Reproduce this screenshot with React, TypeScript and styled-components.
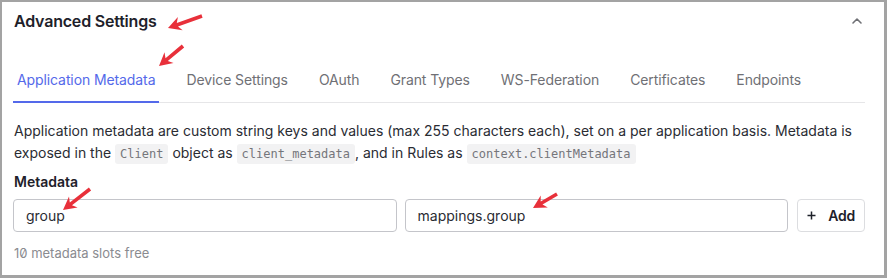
import React, { useState } from "react";
import styled, { createGlobalStyle } from "styled-components";

const GlobalStyle = createGlobalStyle`
  html, body {
    margin: 0;
    padding: 0;
    background: #ffffff;
  }
  body {
    font-family: Inter, "Noto Sans", "Liberation Sans", sans-serif;
    color: #1e212a;
  }
`;

const Frame = styled.div`
  position: relative;
  box-sizing: border-box;
  width: 887px;
  height: 278px;
  border-style: solid;
  border-color: #a3a3a3;
  border-width: 2px 3px 3px 2px;
  padding: 0 19px 0 11px;
  overflow: hidden;
`;

const Header = styled.div`
  display: flex;
  align-items: center;
  justify-content: space-between;
  height: 38px;
  padding-left: 1px;
`;

const Title = styled.h2`
  margin: 0;
  font-size: 16px;
  font-weight: 600;
  letter-spacing: -0.2px;
`;

const Collapse = styled.button`
  display: flex;
  background: none;
  border: none;
  padding: 0;
  margin-right: 2px;
  cursor: pointer;
`;

const TabBar = styled.div`
  display: flex;
  gap: 23px;
  margin-top: 30px;
  border-bottom: 1px solid #e6e6e8;
`;

const Tab = styled.button<{ active?: boolean }>`
  position: relative;
  background: none;
  border: none;
  padding: 0 4px 12px;
  font-family: inherit;
  font-size: 14px;
  line-height: 20px;
  letter-spacing: -0.1px;
  color: ${({ active }) => (active ? "#5469ea" : "#6f7075")};
  cursor: pointer;

  &::after {
    content: "";
    position: absolute;
    left: 0;
    right: 0;
    bottom: -1px;
    height: 2px;
    background: ${({ active }) => (active ? "#5469ea" : "transparent")};
  }
`;

const Description = styled.p`
  margin: 17px 0 0 1px;
  font-size: 14px;
  line-height: 22px;
  color: #2a2c33;
`;

const Code = styled.code`
  display: inline-block;
  font-family: "DejaVu Sans Mono", "Liberation Mono", monospace;
  font-size: 12px;
  line-height: 18px;
  color: #75767b;
  background: #f2f2f3;
  border-radius: 3px;
  padding: 1px 5px;
`;

const Label = styled.div`
  margin: 8px 0 0 1px;
  font-size: 14px;
  font-weight: 600;
  line-height: 20px;
`;

const FieldRow = styled.div`
  display: flex;
  gap: 8px;
  margin-top: 7px;
`;

const Input = styled.input`
  flex: 1;
  min-width: 0;
  box-sizing: border-box;
  height: 33px;
  border: 1px solid #c4c5ca;
  border-radius: 4px;
  padding: 0 12px;
  font-family: inherit;
  font-size: 14px;
  color: #2a2c33;
  outline: none;
`;

const AddButton = styled.button`
  display: flex;
  align-items: center;
  gap: 12px;
  box-sizing: border-box;
  height: 33px;
  margin-left: 1px;
  padding: 0 9px 0 9px;
  background: #fff;
  border: 1px solid #dcdde0;
  border-radius: 4px;
  font-family: inherit;
  font-size: 14px;
  font-weight: 600;
  letter-spacing: -0.2px;
  color: #1e212a;
  cursor: pointer;
`;

const Hint = styled.div`
  margin: 12px 0 0 1px;
  font-size: 13px;
  line-height: 18px;
  color: #8a8b90;
  font-feature-settings: "zero";
`;

const Annotations = styled.svg`
  position: absolute;
  left: -2px;
  top: -2px;
  pointer-events: none;
`;

type Pt = [number, number];

const arrowPath = (tail: Pt, tip: Pt) => {
  const dx = tip[0] - tail[0];
  const dy = tip[1] - tail[1];
  const len = Math.hypot(dx, dy);
  const ux = dx / len;
  const uy = dy / len;
  const nx = -uy;
  const ny = ux;
  const head = 13;
  const hw = 7;
  const sw = 1.8;
  const bx = tip[0] - ux * head;
  const by = tip[1] - uy * head;
  const pts: Pt[] = [
    [tail[0] + nx * sw, tail[1] + ny * sw],
    [bx + ux * 3 + nx * sw, by + uy * 3 + ny * sw],
    [bx + nx * hw, by + ny * hw],
    tip,
    [bx - nx * hw, by - ny * hw],
    [bx + ux * 3 - nx * sw, by + uy * 3 - ny * sw],
    [tail[0] - nx * sw, tail[1] - ny * sw],
  ];
  return "M" + pts.map((p) => p[0].toFixed(1) + " " + p[1].toFixed(1)).join(" L") + " Z";
};

const arrows: [Pt, Pt][] = [
  [[202, 16], [168, 28]],
  [[183, 46], [159, 66]],
  [[90, 189], [63, 210]],
  [[557, 194], [533, 208]],
];

const tabs = [
  "Application Metadata",
  "Device Settings",
  "OAuth",
  "Grant Types",
  "WS-Federation",
  "Certificates",
  "Endpoints",
];

export default function App() {
  const [active, setActive] = useState(0);

  return (
    <>
      <GlobalStyle />
      <Frame>
        <Header>
          <Title>Advanced Settings</Title>
          <Collapse aria-label="Collapse">
            <svg width="12" height="8" viewBox="0 0 12 8">
              <polyline
                points="2,6 6,2 10,6"
                fill="none"
                stroke="#6f7075"
                strokeWidth="1.6"
                strokeLinecap="round"
                strokeLinejoin="round"
              />
            </svg>
          </Collapse>
        </Header>

        <TabBar>
          {tabs.map((t, i) => (
            <Tab key={t} active={i === active} onClick={() => setActive(i)}>
              {t}
            </Tab>
          ))}
        </TabBar>

        <Description>
          Application metadata are custom string keys and values (max 255
          characters each), set on a per application basis. Metadata is
          exposed in the <Code>Client</Code> object as{" "}
          <Code>client_metadata</Code>, and in Rules as{" "}
          <Code>context.clientMetadata</Code>
        </Description>

        <Label>Metadata</Label>
        <FieldRow>
          <Input defaultValue="group" />
          <Input defaultValue="mappings.group" />
          <AddButton>
            <svg width="9" height="9" viewBox="0 0 9 9">
              <path d="M4.5 0.5v8M0.5 4.5h8" stroke="#1e212a" strokeWidth="1.5" />
            </svg>
            Add
          </AddButton>
        </FieldRow>

        <Hint>10 metadata slots free</Hint>

        <Annotations width="887" height="278" viewBox="0 0 887 278">
          {arrows.map(([tail, tip], i) => (
            <path key={i} d={arrowPath(tail, tip)} fill="#e8303a" />
          ))}
        </Annotations>
      </Frame>
    </>
  );
}
